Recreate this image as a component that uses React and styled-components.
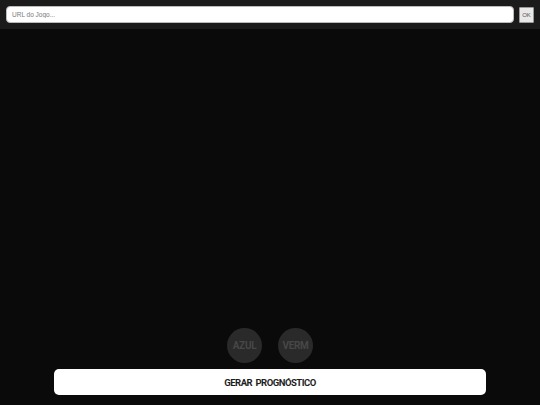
import React from "react";
import styled, { createGlobalStyle } from "styled-components";

const GlobalStyle = createGlobalStyle`
  html, body {
    margin: 0;
    padding: 0;
    height: 100%;
    background: #0a0a0a;
    font-family: Roboto, "Liberation Sans", Arial, sans-serif;
  }
  #root {
    height: 100%;
  }
`;

const Page = styled.div`
  height: 100vh;
  display: flex;
  flex-direction: column;
  background: #0a0a0a;
`;

const TopBar = styled.div`
  display: flex;
  align-items: center;
  gap: 5px;
  padding: 6px 6px 6px 6px;
  background: #1b1b1b;
`;

const UrlInput = styled.input`
  flex: 1;
  height: 17px;
  box-sizing: border-box;
  border: 1px solid #bbb;
  border-radius: 4px;
  padding: 0 5px;
  font-family: "Liberation Sans", Arial, sans-serif;
  font-size: 6.5px;
  background: #fff;
  outline: none;
  &::placeholder {
    color: #7a7a7a;
  }
`;

const OkButton = styled.button`
  width: 15px;
  height: 16px;
  padding: 0;
  box-sizing: border-box;
  border: 1px solid #999;
  border-radius: 1px;
  background: #e8e8e8;
  color: #555;
  font-family: "Liberation Sans", Arial, sans-serif;
  font-size: 6px;
`;

const Stage = styled.div`
  flex: 1;
  display: flex;
  flex-direction: column;
  justify-content: flex-end;
  align-items: center;
  padding-bottom: 10px;
`;

const ChoiceRow = styled.div`
  display: flex;
  gap: 16px;
  margin-bottom: 6px;
`;

const Choice = styled.button`
  width: 35px;
  height: 35px;
  border-radius: 50%;
  border: none;
  padding: 0;
  background: #2a2a2a;
  color: #474747;
  font-family: Roboto, "Liberation Sans", Arial, sans-serif;
  font-weight: 700;
  font-size: 10px;
  letter-spacing: -0.3px;
`;

const MainButton = styled.button`
  width: 80%;
  height: 26px;
  border: none;
  border-radius: 5px;
  background: #fff;
  color: #1e1e1e;
  font-family: Roboto, "Liberation Sans", Arial, sans-serif;
  font-weight: 700;
  font-size: 9.5px;
  letter-spacing: -0.5px;
  word-spacing: 1.5px;
`;

export default function App() {
  return (
    <>
      <GlobalStyle />
      <Page>
        <TopBar>
          <UrlInput placeholder="URL do Jogo..." />
          <OkButton>OK</OkButton>
        </TopBar>
        <Stage>
          <ChoiceRow>
            <Choice>AZUL</Choice>
            <Choice>VERM</Choice>
          </ChoiceRow>
          <MainButton>GERAR PROGNÓSTICO</MainButton>
        </Stage>
      </Page>
    </>
  );
}
